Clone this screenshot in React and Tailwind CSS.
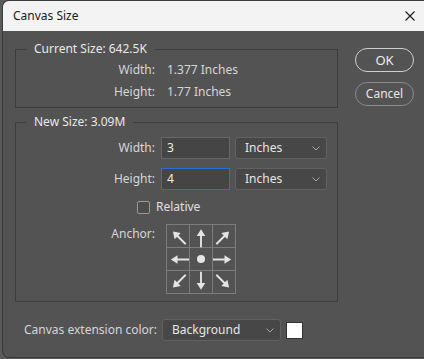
import React from 'react';

const font = { fontFamily: '"Noto Sans", "Open Sans", sans-serif' };

const Chevron = () => (
  <svg width="8" height="5" viewBox="0 0 8 5" className="text-[#a8a8a8]">
    <path d="M0.5 0.5 L4 4 L7.5 0.5" fill="none" stroke="currentColor" strokeWidth="1" />
  </svg>
);

const Select = ({ value, className }) => (
  <div className={`flex items-center justify-between rounded-[3px] border border-[#616161] bg-[#474747] pl-[9px] pr-[6px] text-[#e6e6e6] ${className}`}>
    <span>{value}</span>
    <Chevron />
  </div>
);

const Arrow = ({ rot }) => (
  <svg width="23" height="23" viewBox="0 0 23 23" style={{ transform: `rotate(${rot}deg)` }}>
    <line x1="0" y1="11.5" x2="13" y2="11.5" stroke="#e4e4e4" strokeWidth="2" />
    <path d="M12 7 L19 11.5 L12 16 Z" fill="#e4e4e4" />
  </svg>
);

const AnchorGrid = () => {
  const cells = [225, 270, 315, 180, null, 0, 135, 90, 45];
  return (
    <div className="grid grid-cols-[23px_23px_23px] grid-rows-[23px_23px_23px] border-l border-t border-[#7c7c7c]">
      {cells.map((r, i) => (
        <div key={i} className="flex items-center justify-center border-r border-b border-[#7c7c7c]">
          {r === null ? <div className="h-[8px] w-[8px] rounded-full bg-[#e4e4e4]" /> : <Arrow rot={r} />}
        </div>
      ))}
    </div>
  );
};

const Row = ({ label, children, className = '' }) => (
  <div className={`flex items-center ${className}`}>
    <div className="w-[139px] text-right text-[#d6d6d6]">{label}</div>
    {children}
  </div>
);

export default function App() {
  return (
    <div className="h-[359px] w-[424px] overflow-hidden bg-[#5a5a5a] pl-[2px] text-[12px] leading-[16px]" style={font}>
      <div className="flex h-[358px] w-[422px] flex-col overflow-hidden rounded-l-[7px] border-y border-l border-[#3a3a3a] bg-[#535353]">
        {/* Title bar */}
        <div className="flex h-[30px] shrink-0 items-center justify-between bg-[#f3f3f3] pl-[10px] pr-[8px] text-[#1a1a1a]">
          <span>Canvas Size</span>
          <svg width="10" height="10" viewBox="0 0 10 10" className="mr-[1px]">
            <path d="M0.5 0.5 L9.5 9.5 M9.5 0.5 L0.5 9.5" stroke="#1a1a1a" strokeWidth="1.1" />
          </svg>
        </div>

        {/* Body */}
        <div className="flex pl-[12px] pt-[10px]">
          <div className="w-[323px]">
            <fieldset className="border border-[#3d3d3d] pb-[4px]">
              <legend className="ml-[10px] px-[8px] text-[#e8e8e8]">Current Size: 642.5K</legend>
              <Row label="Width:" className="mt-[2px] h-[22px]">
                <span className="ml-[12px] text-[#d6d6d6]">1.377 Inches</span>
              </Row>
              <Row label="Height:" className="h-[22px]">
                <span className="ml-[12px] text-[#d6d6d6]">1.77 Inches</span>
              </Row>
            </fieldset>

            <fieldset className="mt-[6px] border border-[#3d3d3d] pb-[7px]">
              <legend className="ml-[10px] px-[8px] text-[#e8e8e8]">New Size: 3.09M</legend>
              <Row label="Width:" className="mt-[7px]">
                <div className="ml-[6px] flex h-[22px] w-[69px] items-center border border-[#666] bg-[#454545] pl-[5px] text-[#ececec]">3</div>
                <Select value="Inches" className="ml-[5px] h-[22px] w-[92px]" />
              </Row>
              <Row label="Height:" className="mt-[9px]">
                <div className="ml-[6px] flex h-[22px] w-[69px] items-center border border-[#2570d8] bg-[#454545] pl-[5px] text-[#ececec]">4</div>
                <Select value="Inches" className="ml-[5px] h-[22px] w-[92px]" />
              </Row>
              <div className="ml-[121px] mt-[8px] flex h-[18px] items-center gap-[6px]">
                <div className="h-[13px] w-[13px] rounded-[2px] border border-[#9a9a9a] bg-[#4c4c4c]" />
                <span className="text-[#e0e0e0]">Relative</span>
              </div>
              <div className="mt-[8px] flex items-start">
                <div className="mt-[2px] w-[139px] text-right text-[#d6d6d6]">Anchor:</div>
                <div className="ml-[11px]">
                  <AnchorGrid />
                </div>
              </div>
            </fieldset>

            <div className="ml-[9px] mt-[17px] flex items-center">
              <span className="w-[138px] text-[#d6d6d6]">Canvas extension color:</span>
              <Select value="Background" className="h-[22px] w-[119px]" />
              <div className="ml-[5px] h-[17px] w-[17px] border border-[#333] bg-white" />
            </div>
          </div>

          <div className="ml-[17px] mt-[7px] flex flex-col gap-[10px]">
            <div className="flex h-[24px] w-[59px] items-center justify-center rounded-full border-[1.5px] border-[#cfcfcf] text-[13px] text-[#ececec]">OK</div>
            <div className="flex h-[24px] w-[59px] items-center justify-center rounded-full border-[1.5px] border-[#8a8a8a] text-[#e6e6e6]">Cancel</div>
          </div>
        </div>
      </div>
    </div>
  );
}
